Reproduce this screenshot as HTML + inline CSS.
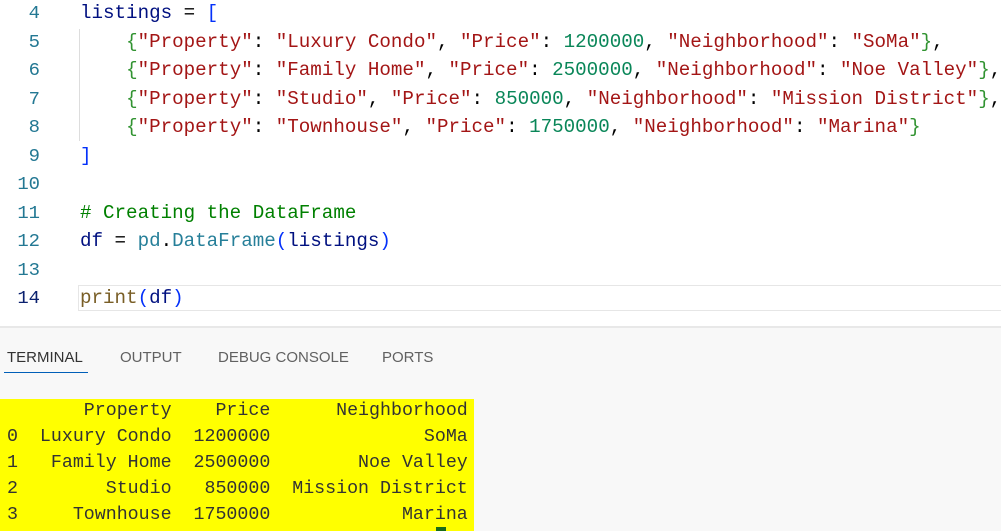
<!DOCTYPE html>
<html><head><meta charset="utf-8"><style>
html,body{margin:0;padding:0;width:1001px;height:529px;overflow:hidden;background:#fff;}
.ed{position:absolute;left:0;top:0;width:1001px;height:326px;background:#fff;}
.ln{position:absolute;left:0;width:40px;text-align:right;font:18.9px "Liberation Mono",monospace;color:#237893;}
.cl{position:absolute;left:80px;white-space:pre;font:19.2px "Liberation Mono",monospace;color:#001080;}
.s{color:#a31515}.n{color:#098658}.g{color:#319331}.b{color:#0431fa}.c{color:#008000}.t{color:#267f99}.f{color:#795e26}.k{color:#000}
.panel{position:absolute;left:0;top:326px;width:1001px;height:203px;background:#f8f8f8;border-top:2px solid #e8e8e8;}
.tab{position:absolute;top:21px;font:15px "Liberation Sans",sans-serif;color:#616161;}
.term{position:absolute;left:0;top:71px;width:474px;height:132px;background:#ffff00;}
.tl{position:absolute;left:7px;white-space:pre;font:18.3px "Liberation Mono",monospace;color:#333;}
</style></head><body>
<div class="ed">
<div style="position:absolute;left:78px;top:285px;width:923px;height:24px;border:1px solid #e6e6e6;border-right:none"></div>
<div style="position:absolute;left:79px;top:29px;width:1px;height:112px;background:#ddd"></div>
<div class="ln" style="top:2px">4</div><div class="ln" style="top:30.5px">5</div><div class="ln" style="top:59px">6</div><div class="ln" style="top:87.5px">7</div><div class="ln" style="top:116px">8</div><div class="ln" style="top:144.5px">9</div><div class="ln" style="top:173px">10</div><div class="ln" style="top:201.5px">11</div><div class="ln" style="top:230px">12</div><div class="ln" style="top:258.5px">13</div><div class="ln" style="top:287px;color:#0b216f">14</div>
<div class="cl" style="top:2px">listings <span class="k">=</span> <span class="b">[</span></div>
<div class="cl" style="top:30.5px">    <span class="g">{</span><span class="s">"Property"</span><span class="k">:</span> <span class="s">"Luxury Condo"</span><span class="k">,</span> <span class="s">"Price"</span><span class="k">:</span> <span class="n">1200000</span><span class="k">,</span> <span class="s">"Neighborhood"</span><span class="k">:</span> <span class="s">"SoMa"</span><span class="g">}</span><span class="k">,</span></div>
<div class="cl" style="top:59px">    <span class="g">{</span><span class="s">"Property"</span><span class="k">:</span> <span class="s">"Family Home"</span><span class="k">,</span> <span class="s">"Price"</span><span class="k">:</span> <span class="n">2500000</span><span class="k">,</span> <span class="s">"Neighborhood"</span><span class="k">:</span> <span class="s">"Noe Valley"</span><span class="g">}</span><span class="k">,</span></div>
<div class="cl" style="top:87.5px">    <span class="g">{</span><span class="s">"Property"</span><span class="k">:</span> <span class="s">"Studio"</span><span class="k">,</span> <span class="s">"Price"</span><span class="k">:</span> <span class="n">850000</span><span class="k">,</span> <span class="s">"Neighborhood"</span><span class="k">:</span> <span class="s">"Mission District"</span><span class="g">}</span><span class="k">,</span></div>
<div class="cl" style="top:116px">    <span class="g">{</span><span class="s">"Property"</span><span class="k">:</span> <span class="s">"Townhouse"</span><span class="k">,</span> <span class="s">"Price"</span><span class="k">:</span> <span class="n">1750000</span><span class="k">,</span> <span class="s">"Neighborhood"</span><span class="k">:</span> <span class="s">"Marina"</span><span class="g">}</span></div>
<div class="cl" style="top:144.5px"><span class="b">]</span></div>
<div class="cl c" style="top:201.5px"># Creating the DataFrame</div>
<div class="cl" style="top:230px">df <span class="k">=</span> <span class="t">pd</span><span class="k">.</span><span class="t">DataFrame</span><span class="b">(</span>listings<span class="b">)</span></div>
<div class="cl" style="top:287px"><span class="f">print</span><span class="b">(</span>df<span class="b">)</span></div>
</div>
<div class="panel">
<div class="tab" style="left:7px;color:#333">TERMINAL</div>
<div style="position:absolute;left:4px;top:44px;width:84px;height:1px;background:#005fb8"></div>
<div class="tab" style="left:120px">OUTPUT</div>
<div class="tab" style="left:218px">DEBUG CONSOLE</div>
<div class="tab" style="left:382px">PORTS</div>
<div class="term"></div>
<div class="tl" style="top:73px">       Property    Price      Neighborhood</div>
<div class="tl" style="top:99px">0  Luxury Condo  1200000              SoMa</div>
<div class="tl" style="top:125px">1   Family Home  2500000        Noe Valley</div>
<div class="tl" style="top:151px">2        Studio   850000  Mission District</div>
<div class="tl" style="top:177px">3     Townhouse  1750000            Marina</div>
<div style="position:absolute;left:436px;top:199px;width:10px;height:4px;background:#1a6b1a"></div>
</div>
</body></html>
